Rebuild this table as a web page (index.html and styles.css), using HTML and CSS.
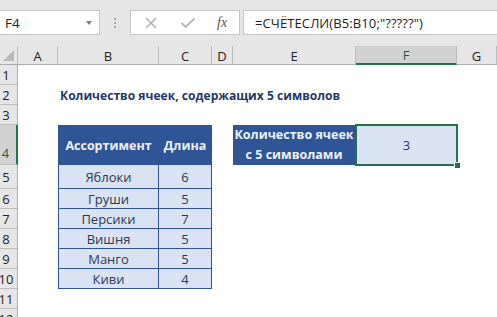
FILE: index.html
```html
<!DOCTYPE html>
<html lang="ru">
<head>
<meta charset="utf-8">
<title>Excel</title>
<link rel="stylesheet" href="styles.css">
</head>
<body>
<div class="app">
  <div class="toolbar">
    <div class="namebox">
      <span class="name">F4</span>
      <span class="drop"></span>
    </div>
    <div class="dots"><i></i><i></i><i></i></div>
    <div class="fbtns">
      <svg class="ico" width="14" height="12" viewBox="0 0 14 12"><path d="M2 1 L12 11 M12 1 L2 11" stroke="#b4b4b4" stroke-width="1.6" fill="none"/></svg>
      <svg class="ico" width="16" height="12" viewBox="0 0 16 12"><path d="M1.5 6 L5.5 10 L14.5 1.5" stroke="#b4b4b4" stroke-width="1.8" fill="none"/></svg>
      <span class="fx">fx</span>
    </div>
    <div class="formula">=СЧЁТЕСЛИ(B5:B10;"?????")</div>
  </div>
  <div class="sheet">
    <div class="corner"><span class="tri"></span></div>
    <div class="ch">A</div>
    <div class="ch">B</div>
    <div class="ch">C</div>
    <div class="ch">D</div>
    <div class="ch">E</div>
    <div class="ch ch-sel">F</div>
    <div class="ch">G</div>

    <div class="rh r1">1</div>
    <div class="rh r2">2</div>
    <div class="rh r3">3</div>
    <div class="rh r4 rh-sel">4</div>
    <div class="rh r5">5</div>
    <div class="rh r6">6</div>
    <div class="rh r7">7</div>
    <div class="rh r8">8</div>
    <div class="rh r9">9</div>
    <div class="rh r10">10</div>
    <div class="rh r11">11</div>
    <div class="rh r12">12</div>

    <div class="title">Количество ячеек, содержащих 5 символов</div>

    <div class="tc th cb r4">Ассортимент</div>
    <div class="tc th cc r4">Длина</div>
    <div class="tc td cb r5">Яблоки</div>
    <div class="tc td cc r5">6</div>
    <div class="tc td cb r6">Груши</div>
    <div class="tc td cc r6">5</div>
    <div class="tc td cb r7">Персики</div>
    <div class="tc td cc r7">7</div>
    <div class="tc td cb r8">Вишня</div>
    <div class="tc td cc r8">5</div>
    <div class="tc td cb r9">Манго</div>
    <div class="tc td cc r9">5</div>
    <div class="tc td cb r10">Киви</div>
    <div class="tc td cc r10">4</div>

    <div class="label">Количество ячеек<br>с 5 символами</div>
    <div class="result">3<span class="selbox"></span><span class="handle"></span></div>
  </div>
</div>
</body>
</html>
```
FILE: styles.css
```css
* { box-sizing: border-box; }
html, body { margin: 0; padding: 0; background: #ffffff; }
.app {
  width: 497px;
  height: 317px;
  overflow: hidden;
  font-family: "Open Sans", "Noto Sans", sans-serif;
}
.toolbar {
  height: 46px;
  background: #e6e6e6;
  display: flex;
  align-items: flex-start;
  padding-top: 10px;
}
.namebox {
  width: 100px;
  height: 25px;
  background: #fff;
  border: 1px solid #c6c6c6;
  border-left: none;
  display: flex;
  align-items: center;
  justify-content: space-between;
  padding: 0 7px 0 5px;
}
.name { font-size: 13.5px; color: #222; }
.drop {
  width: 0; height: 0;
  border-left: 3.5px solid transparent;
  border-right: 3.5px solid transparent;
  border-top: 4px solid #7a7a7a;
  margin-top: 1px;
}
.dots {
  width: 30px;
  height: 25px;
  display: flex;
  flex-direction: column;
  align-items: center;
  justify-content: center;
  gap: 2px;
}
.dots i { display: block; width: 2px; height: 2px; background: #a6a6a6; }
.fbtns {
  width: 110px;
  height: 25px;
  background: #fff;
  border: 1px solid #c6c6c6;
  display: flex;
  align-items: center;
  padding-left: 13px;
  gap: 22px;
}
.fx {
  font-family: "Liberation Serif", serif;
  font-style: italic;
  font-size: 14px;
  color: #555;
  margin-left: -1px;
}
.formula {
  flex: 1;
  height: 25px;
  margin-left: 3px;
  background: #fff;
  border: 1px solid #c6c6c6;
  border-right: none;
  font-size: 13px;
  color: #222;
  display: flex;
  align-items: center;
  padding-left: 11px;
  letter-spacing: 0.1px;
}
.sheet {
  display: grid;
  grid-template-columns: 18px 40px 101px 53px 21px 123px 101px 1fr;
  grid-template-rows: 19px 20px 20px 20px 40px 24px 20px 20px 20px 20px 20px 20px 20px;
  background: #fff;
}
.corner {
  grid-row: 1; grid-column: 1;
  background: #e6e6e6;
  border-right: 1px solid #bdbdbd;
  border-bottom: 1px solid #ababab;
  position: relative;
}
.tri {
  position: absolute;
  right: 3px; bottom: 3px;
  width: 0; height: 0;
  border-left: 11px solid transparent;
  border-bottom: 11px solid #b9b9b9;
}
.ch {
  grid-row: 1;
  background: #e6e6e6;
  border-right: 1px solid #bdbdbd;
  border-bottom: 1px solid #ababab;
  font-size: 13px;
  color: #222;
  display: flex;
  align-items: center;
  justify-content: center;
  padding-top: 1px;
}
.ch-sel {
  background: #d2d2d2;
  border-bottom: 2px solid #217346;
  color: #1e5a3a;
}
.rh {
  grid-column: 1;
  background: #e6e6e6;
  border-right: 1px solid #ababab;
  border-bottom: 1px solid #bdbdbd;
  font-size: 13px;
  color: #222;
  display: flex;
  align-items: center;
  justify-content: center;
  padding-right: 5px;
  padding-top: 1px;
}
.rh-sel {
  background: #d2d2d2;
  border-right: 2px solid #217346;
  color: #1e5a3a;
  align-items: flex-end;
  padding-bottom: 2px;
}
.r1 { grid-row: 2; }
.r2 { grid-row: 3; }
.r3 { grid-row: 4; }
.r4 { grid-row: 5; }
.r5 { grid-row: 6; }
.r6 { grid-row: 7; }
.r7 { grid-row: 8; }
.r8 { grid-row: 9; }
.r9 { grid-row: 10; }
.r10 { grid-row: 11; }
.r11 { grid-row: 12; }
.r12 { grid-row: 13; }
.title {
  grid-row: 3;
  grid-column: 3 / 8;
  font-weight: 700;
  font-size: 12.1px;
  color: #1f3864;
  display: flex;
  align-items: center;
  padding-left: 2px;
  white-space: nowrap;
}
.tc {
  display: flex;
  align-items: center;
  justify-content: center;
  border-right: 1px solid #2f5597;
  border-bottom: 1px solid #2f5597;
  font-size: 13px;
  white-space: nowrap;
}
.cb { grid-column: 3; border-left: 1px solid #2f5597; }
.cc { grid-column: 4; }
.th {
  background: #2f5597;
  color: #eef2f9;
  font-weight: 700;
  border-top: 1px solid #2f5597;
  font-size: 12.5px;
}
.td {
  background: #dae3f3;
  color: #2b3954;
}
.label {
  grid-row: 5;
  grid-column: 6;
  background: #2f5597;
  color: #eef2f9;
  font-weight: 700;
  font-size: 12.5px;
  line-height: 20px;
  text-align: center;
  display: flex;
  align-items: center;
  justify-content: center;
  margin-right: 1px;
}
.result {
  grid-row: 5;
  grid-column: 7;
  background: #dae3f3;
  color: #1f3864;
  font-size: 13px;
  display: flex;
  align-items: center;
  justify-content: center;
  position: relative;
}
.selbox {
  position: absolute;
  left: -1px; top: -1px; right: -1px; bottom: -1px;
  border: 2px solid #217346;
}
.handle {
  position: absolute;
  right: -4px; bottom: -4px;
  width: 7px; height: 7px;
  background: #217346;
  border: 1px solid #fff;
}
```
